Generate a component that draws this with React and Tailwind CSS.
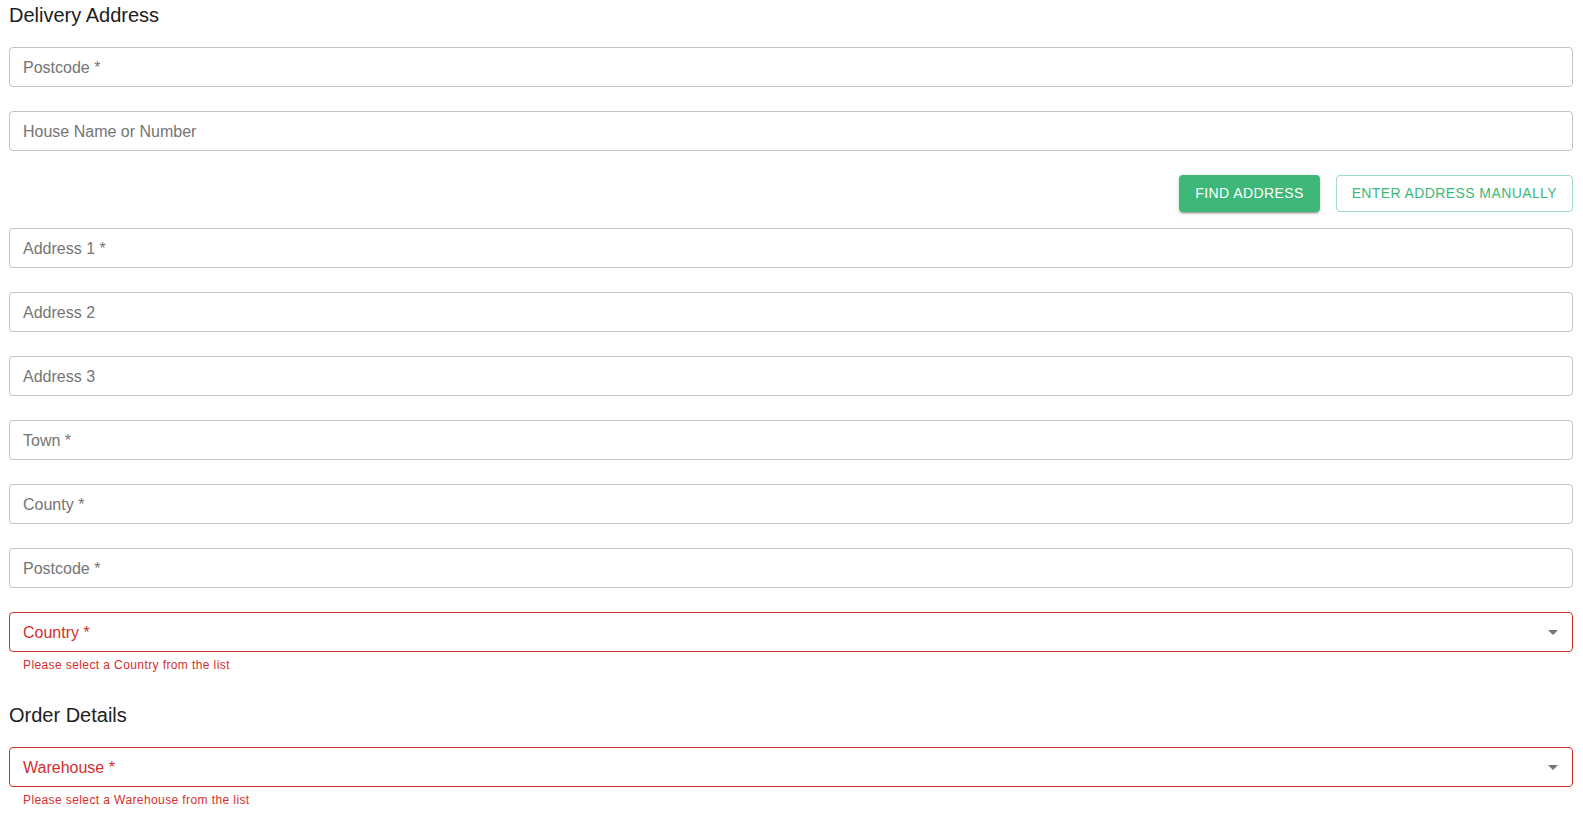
import React from 'react'

const fields = [
  { label: 'Address 1 *' },
  { label: 'Address 2' },
  { label: 'Address 3' },
  { label: 'Town *' },
  { label: 'County *' },
  { label: 'Postcode *' },
]

function TextField({ label }) {
  return (
    <div className="mb-[24px]">
      <div className="h-[40px] border border-[#c4c4c4] rounded-[4px] flex items-center px-[13px] pt-[2px] text-[16px] text-[#757575]">
        {label}
      </div>
    </div>
  )
}

function SelectField({ label, error }) {
  return (
    <div>
      <div className="h-[40px] border border-[#d32f2f] rounded-[4px] flex items-center justify-between pl-[13px] pr-[7px] text-[16px] text-[#d32f2f]">
        <span className="pt-[2px]">{label}</span>
        <svg viewBox="0 0 24 24" className="w-6 h-6 fill-[#757575]">
          <path d="M7 10l5 5 5-5z" />
        </svg>
      </div>
      <p className="mt-[3px] ml-[14px] text-[12px] leading-[20px] tracking-[0.4px] text-[#d32f2f]">
        {error}
      </p>
    </div>
  )
}

export default function App() {
  return (
    <div className="bg-white min-h-screen pl-[9px] pr-[10px] pt-px font-['Liberation_Sans',_Arial,_sans-serif]">
      {/* Delivery address */}
      <h2 className="text-[20px] leading-[28px] text-[#212121] mb-[18px]">Delivery Address</h2>

      <TextField label="Postcode *" />
      <TextField label="House Name or Number" />

      <div className="flex justify-end gap-4 mt-[1px] mb-[16px]">
        <button className="h-[37px] px-4 rounded-[4px] bg-[#3db879] text-white text-[14px] tracking-[0.4px] shadow-[0_3px_1px_-2px_rgba(0,0,0,0.2),0_2px_2px_0_rgba(0,0,0,0.14),0_1px_5px_0_rgba(0,0,0,0.12)]">
          FIND ADDRESS
        </button>
        <button className="h-[37px] px-[15px] rounded-[4px] border border-[#9edcbb] text-[#3db879] text-[14px] tracking-[0.4px]">
          ENTER ADDRESS MANUALLY
        </button>
      </div>

      {fields.map(f => (
        <TextField key={f.label} label={f.label} />
      ))}

      <SelectField label="Country *" error="Please select a Country from the list" />

      {/* Order details */}
      <h2 className="text-[20px] leading-[28px] text-[#212121] mt-[26px] mb-[18px]">Order Details</h2>

      <SelectField label="Warehouse *" error="Please select a Warehouse from the list" />
    </div>
  )
}
